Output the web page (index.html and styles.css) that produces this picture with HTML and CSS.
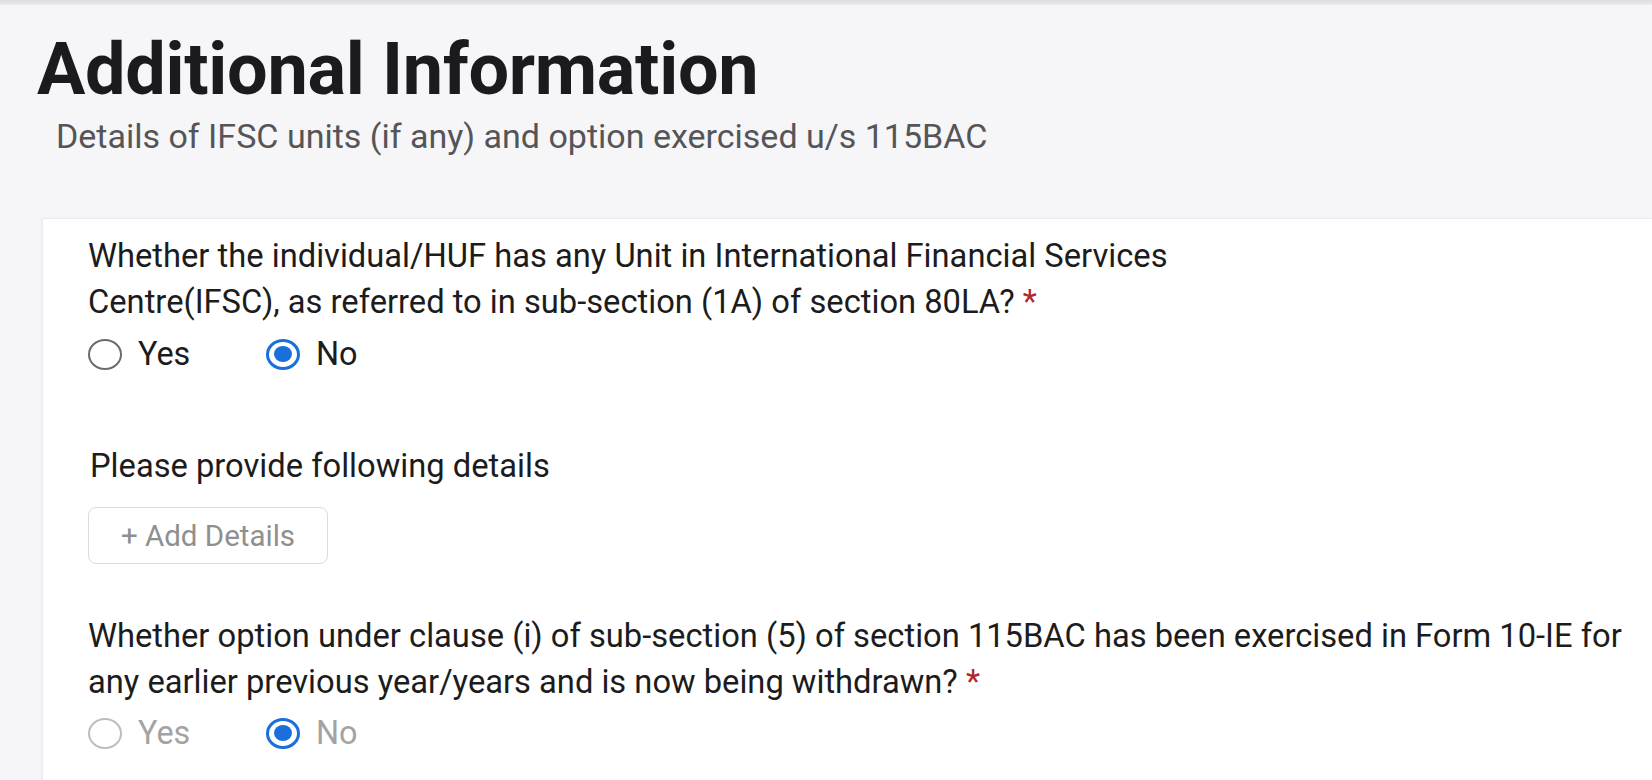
FILE: index.html
```html
<!DOCTYPE html>
<html lang="en">

<head>
    <meta charset="UTF-8">
    <meta name="viewport" content="width=device-width, initial-scale=1.0">
    <title>Additional Information</title>
    <link rel="stylesheet" href="styles.css">
</head>

<body>
    <div class="topbar"></div>
    <div class="page-head">
        <h1 class="title">Additional Information</h1>
        <p class="subtitle">Details of IFSC units (if any) and option exercised u/s 115BAC</p>
    </div>
    <div class="card">
        <div class="question narrow">
            Whether the individual/HUF has any Unit in International Financial Services Centre(IFSC), as referred to in sub-section (1A) of section 80LA? <span class="req">*</span>
        </div>
        <div class="radios">
            <label class="opt"><input type="radio" name="ifsc"> Yes</label>
            <label class="opt"><input type="radio" name="ifsc" checked> No</label>
        </div>

        <div class="details-label">Please provide following details</div>
        <button class="add-btn" disabled>+ Add Details</button>

        <div class="question second">
            Whether option under clause (i) of sub-section (5) of section 115BAC has been exercised in Form 10-IE for any earlier previous year/years and is now being withdrawn? <span class="req">*</span>
        </div>
        <div class="radios disabled">
            <label class="opt"><input type="radio" name="opt115" disabled> Yes</label>
            <label class="opt"><input type="radio" name="opt115" checked disabled> No</label>
        </div>
    </div>
</body>

</html>
```

FILE: styles.css
```css
* {
    margin: 0;
    padding: 0;
    box-sizing: border-box;
}

body {
    background: #f6f6f9;
    font-family: Roboto, "Liberation Sans", sans-serif;
    color: #1f1f1f;
    overflow: hidden;
}

.topbar {
    height: 5px;
    background: linear-gradient(#dcdce0, #ececf0);
}

.page-head {
    padding: 0 0 0 37px;
}

.title {
    font-size: 72px;
    font-weight: 700;
    line-height: 72px;
    color: #1b1b1d;
    letter-spacing: -0.3px;
    margin-top: 29px;
}

.subtitle {
    font-size: 34px;
    line-height: 40px;
    color: #555558;
    margin: 10px 0 0 19px;
}

.card {
    margin: 62px 0 0 42px;
    background: #fff;
    border: 1px solid #ebebef;
    border-right: none;
    padding: 14px 0 40px 45px;
    box-shadow: -1px 0 3px rgba(0, 0, 0, 0.03);
}

.question {
    font-size: 32.7px;
    line-height: 46px;
    color: #1c1c1c;
}

.narrow {
    max-width: 1150px;
}

.second {
    max-width: 1562px;
    margin-top: 49px;
}

.req {
    color: #b3262d;
}

.radios {
    display: flex;
    gap: 50px;
    margin-top: 6px;
    height: 46px;
    align-items: center;
}

.radios.disabled {
    margin-top: 5px;
}

.opt {
    display: flex;
    align-items: center;
    gap: 16px;
    width: 128px;
    font-size: 32.4px;
    color: #1c1c1c;
}

.opt input {
    appearance: none;
    flex: none;
    width: 34px;
    height: 31px;
    border: 2px solid #6b6b6b;
    border-radius: 50%;
    margin: 0;
    display: grid;
    place-content: center;
}

.opt input:checked {
    border: 3px solid #1a6fdc;
}

.opt input:checked::before {
    content: "";
    display: block;
    width: 18px;
    height: 16px;
    border-radius: 50%;
    background: #1a6fdc;
}

.radios.disabled .opt {
    color: #a3a3a3;
}

.radios.disabled input:not(:checked) {
    border-color: #bdbdbd;
}

.details-label {
    font-size: 32.7px;
    line-height: 46px;
    margin: 66px 0 0 2px;
    color: #1c1c1c;
}

.add-btn {
    margin-top: 18px;
    height: 57px;
    width: 240px;
    border: 1px solid #dcdcdc;
    border-radius: 8px;
    background: #fff;
    font-family: Roboto, "Liberation Sans", sans-serif;
    font-size: 29.5px;
    color: #8f8f8f;
    display: block;
}
```
